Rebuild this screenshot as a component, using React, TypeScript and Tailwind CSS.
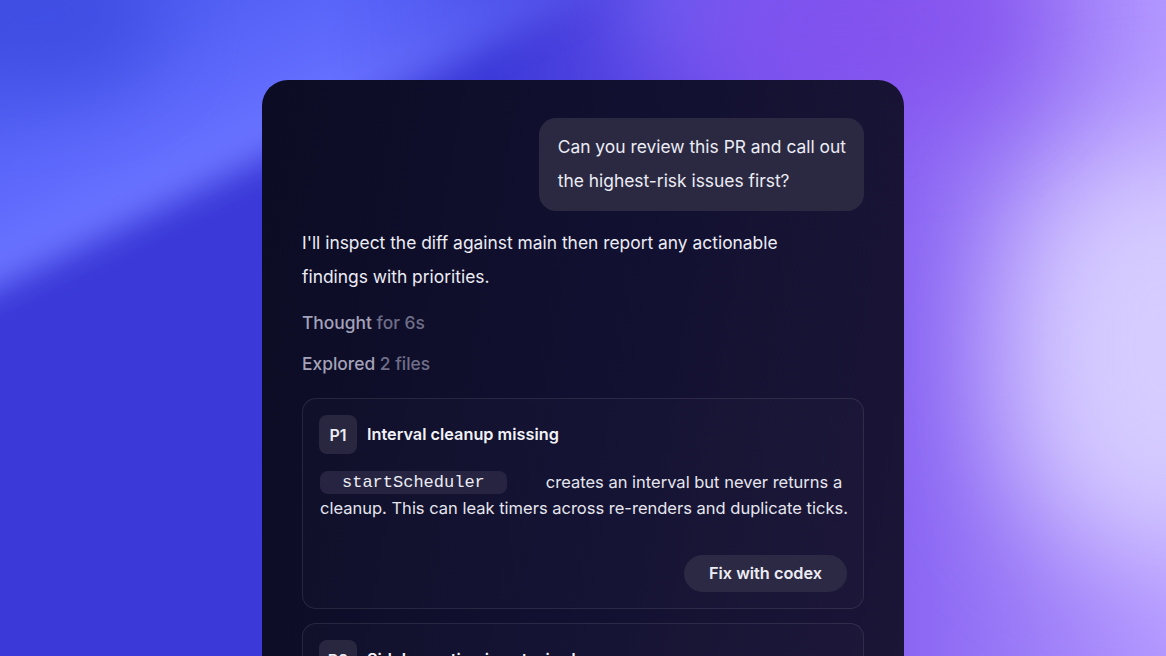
import React from "react";

const font = { fontFamily: "Inter, 'Noto Sans', sans-serif" };

function Finding({ p, title, children, button }: { p: string; title: string; children?: React.ReactNode; button?: boolean }) {
  return (
    <div className="rounded-[14px] border border-white/[0.09] bg-white/[0.015] pl-4 pr-4 pt-4 pb-4">
      <div className="flex items-center gap-[10px]">
        <div className="flex h-[39px] w-[38px] items-center justify-center rounded-[8px] bg-[#29273f] text-[16px] font-semibold text-[#ececf4]">
          {p}
        </div>
        <div className="text-[16.3px] font-semibold text-[#f2f2f8]">{title}</div>
      </div>
      {children}
      {button && (
        <div className="mt-[34px] flex justify-end">
          <button className="h-[37px] w-[163px] rounded-full bg-[#2c2944] text-[16.3px] font-semibold text-[#ececf4]">
            Fix with codex
          </button>
        </div>
      )}
    </div>
  );
}

export default function App() {
  return (
    <div style={font} className="relative h-[656px] w-[1166px] overflow-hidden bg-[#3b3ad9]">
      {/* background light layers */}
      <div className="pointer-events-none absolute inset-0 bg-[linear-gradient(90deg,rgba(0,0,0,0)_42%,#5e48e6_58%,#8660f2_75%,#9c7cf8_88%,#b296ff_100%)]" />
      <div className="pointer-events-none absolute inset-0 [mask-image:linear-gradient(90deg,black_0%,black_28%,transparent_58%)]">
        <div className="absolute left-[-200px] top-[-224px] h-[400px] w-[760px] rotate-[-26deg] bg-[linear-gradient(180deg,#4450e8_0%,#5360f4_60%,#636eff_88%,#7078ff_100%)] blur-[16px]" />
      </div>
      <div className="pointer-events-none absolute left-[-80px] top-[-60px] h-[150px] w-[240px] rounded-full bg-[#3a48de] opacity-70 blur-[40px]" />
      <div className="pointer-events-none absolute left-[620px] top-[-60px] h-[110px] w-[220px] rounded-full bg-[#6266f2] opacity-80 blur-[40px]" />
      <div className="pointer-events-none absolute right-[-160px] top-[140px] h-[420px] w-[320px] rounded-full bg-[#d6ccff] blur-[60px]" />
      <div className="pointer-events-none absolute right-[120px] top-[-80px] h-[200px] w-[380px] rounded-full bg-[#8450ee] opacity-80 blur-[50px]" />

      <div className="relative flex justify-center pt-[80px]">
        <div className="h-[620px] w-[642px] rounded-[26px] bg-[linear-gradient(100deg,#0c0c24_0%,#111030_50%,#1b1536_100%)] px-10 pt-[38px]">
          <div className="flex justify-end">
            <div className="rounded-[17px] bg-[#2b2942] pb-[13px] pl-[19px] pr-[18px] pt-[12px] text-[17.4px] leading-[34px] text-[#ececf4]">
              Can you review this PR and call out
              <br />
              the highest-risk issues first?
            </div>
          </div>
          <div className="mt-[15px] text-[17.4px] leading-[34px] text-[#ececf4]">
            I'll inspect the diff against main then report any actionable
            <br />
            findings with priorities.
          </div>
          <div className="mt-[12px] text-[17.4px] font-medium leading-[34px] text-[#a3a2b8]">
            Thought <span className="text-[#6f6e88]">for 6s</span>
          </div>
          <div className="mt-[7px] text-[17.4px] font-medium leading-[34px] text-[#a3a2b8]">
            Explored <span className="text-[#6f6e88]">2 files</span>
          </div>
          <div className="mt-[17px] flex flex-col gap-[14px]">
            <Finding p="P1" title="Interval cleanup missing" button>
              <div className="mt-[15px] whitespace-nowrap pl-[1px] text-[16.5px] leading-[26px] text-[#e6e6ee]">
                <span
                  className="mr-[39px] inline-block h-[23px] rounded-[8px] bg-[#262440] px-[22px] align-[1px] text-[17px] leading-[23px] text-[#ececf4]"
                  style={{ fontFamily: "'Liberation Mono', 'DejaVu Sans Mono', monospace" }}
                >
                  startScheduler
                </span>
                creates an interval but never returns a
                <br />
                cleanup. This can leak timers across re-renders and duplicate ticks.
              </div>
            </Finding>
            <Finding p="P2" title="Sidebar action is not wired" />
          </div>
        </div>
      </div>
    </div>
  );
}
